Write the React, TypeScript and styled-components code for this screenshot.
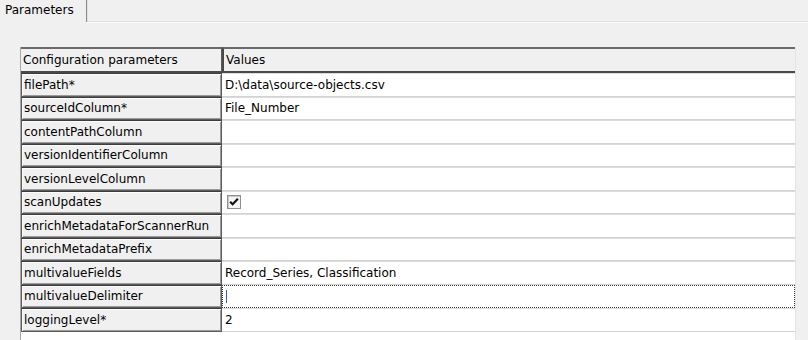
import React from "react";
import styled, { createGlobalStyle } from "styled-components";

interface IParam {
  name: string;
  value?: string;
  kind?: "text" | "check" | "focus";
}

const params: IParam[] = [
  { name: "filePath*", value: "D:\\data\\source-objects.csv" },
  { name: "sourceIdColumn*", value: "File_Number" },
  { name: "contentPathColumn" },
  { name: "versionIdentifierColumn" },
  { name: "versionLevelColumn" },
  { name: "scanUpdates", kind: "check" },
  { name: "enrichMetadataForScannerRun" },
  { name: "enrichMetadataPrefix" },
  { name: "multivalueFields", value: "Record_Series, Classification" },
  { name: "multivalueDelimiter", kind: "focus" },
  { name: "loggingLevel*", value: "2" },
];

const GlobalStyle = createGlobalStyle`
  html, body {
    margin: 0;
    background: #f0f0f0;
    font-family: "DejaVu Sans", "Liberation Sans", sans-serif;
    font-size: 12px;
    color: #000;
  }
`;

const Window = styled.div`
  width: 808px;
  height: 340px;
  overflow: hidden;
  background: #f0f0f0;
`;

const TabBar = styled.div`
  display: flex;
  height: 22px;
`;

const Tab = styled.div`
  display: flex;
  align-items: center;
  padding: 0 0 2px 5px;
  width: 81px;
  border-right: 1px solid #8a8a8a;
  box-shadow: 1px 0 0 #e2e2e2;
  white-space: nowrap;
`;

const TabRest = styled.div`
  flex: 1;
  border-bottom: 1px solid #e0e0e0;
  box-shadow: 0 1px 0 #fbfbfb;
`;

const Panel = styled.div`
  padding: 25px 12px 0 20px;
`;

const Grid = styled.div`
  background: #fff;
  border-left: 1px solid #a8a8a8;
  border-right: 1px solid #e4e4e4;
  height: 300px;
`;

const Row = styled.div<{ $head?: boolean }>`
  display: grid;
  grid-template-columns: 201px 1fr;
  height: ${({ $head }) => ($head ? "26px" : "23.5px")};
`;

const Label = styled.div`
  display: flex;
  align-items: center;
  padding-left: 2px;
  background: #f0f0f0;
  border: 1px solid #5c5c5c;
  border-top-color: #3c3c3c;
  box-shadow: inset 1px 1px 0 #fdfdfd, inset -1px -1px 0 #9a9a9a;
  white-space: nowrap;
  overflow: hidden;
`;

const HeadCell = styled(Label)`
  border-left: none;
  border-top: 2px solid #6a6a6a;
  border-bottom: 2px solid #4a4a4a;
  box-shadow: none;
`;

const HeadValue = styled(HeadCell)`
  border-right: none;
  border-left: 2px solid #4a4a4a;
`;

const Value = styled.div<{ $focus?: boolean }>`
  display: flex;
  align-items: center;
  padding-left: 3px;
  background: #fff;
  border-top: 1px solid ${({ $focus }) => ($focus ? "transparent" : "#dcdcdc")};
  border-bottom: 1px solid ${({ $focus }) => ($focus ? "transparent" : "#d2d2d2")};
  outline: ${({ $focus }) => ($focus ? "1px dotted #3a3a3a" : "none")};
  outline-offset: -1px;
  white-space: nowrap;
  overflow: hidden;
`;

const Caret = styled.span`
  display: inline-block;
  width: 1px;
  height: 13px;
  margin-left: 1px;
  background: #2a64c8;
`;

const CheckBox = styled.span`
  display: inline-flex;
  align-items: center;
  justify-content: center;
  width: 12px;
  height: 12px;
  margin-left: 2px;
  border: 1px solid #8e8f8f;
  background: #f4f4f4;
  box-shadow: inset 1px 1px 0 #c9c9c9;
`;

const App = () => (
  <Window>
    <GlobalStyle />
    <TabBar>
      <Tab>Parameters</Tab>
      <TabRest />
    </TabBar>
    <Panel>
      <Grid>
        <Row $head>
          <HeadCell>Configuration parameters</HeadCell>
          <HeadValue>Values</HeadValue>
        </Row>
        {params.map((p) => (
          <Row key={p.name}>
            <Label>{p.name}</Label>
            <Value $focus={p.kind === "focus"}>
              {p.kind === "check" && (
                <CheckBox>
                  <svg width="10" height="10" viewBox="0 0 9 9">
                    <path d="M1 4.2 L3.3 6.6 L8 1.6" fill="none" stroke="#111" strokeWidth="1.9" />
                  </svg>
                </CheckBox>
              )}
              {p.kind === "focus" && <Caret />}
              {p.value}
            </Value>
          </Row>
        ))}
      </Grid>
    </Panel>
  </Window>
);

export default App;
